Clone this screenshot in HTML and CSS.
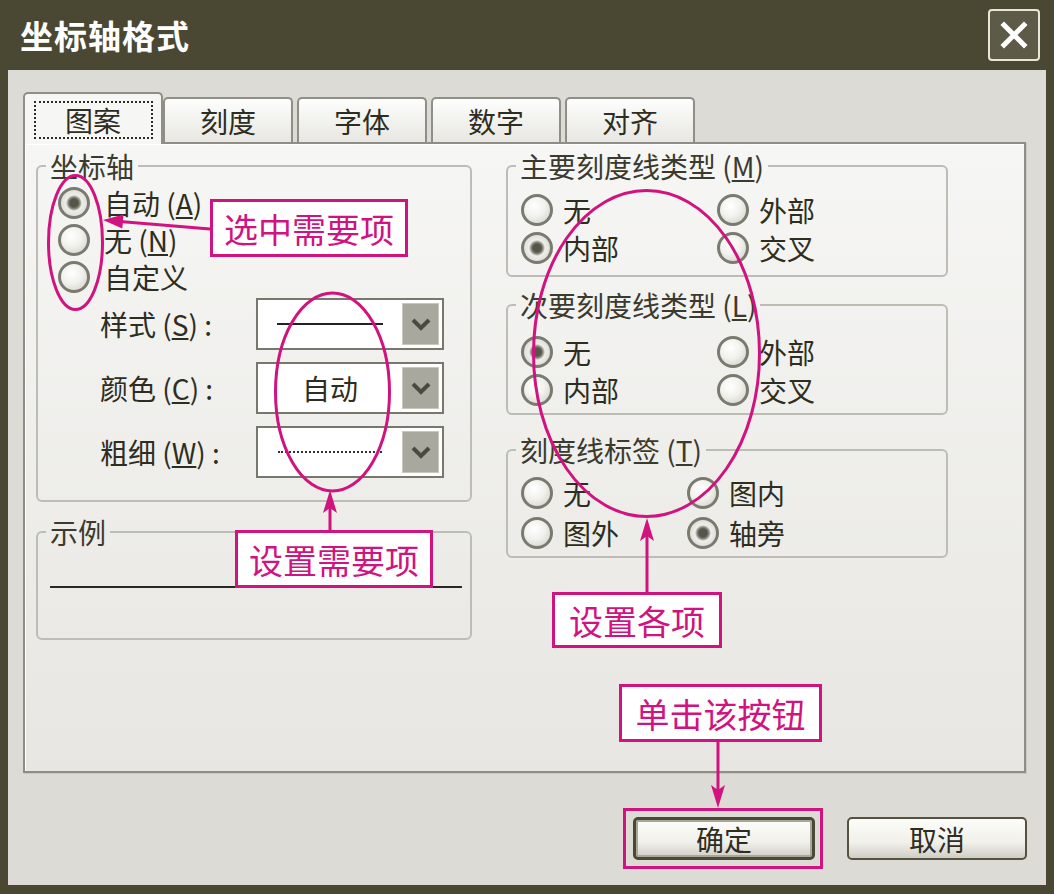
FILE: index.html
```html
<!DOCTYPE html>
<html lang="zh-CN">
<head>
    <meta charset="UTF-8">
    <meta name="viewport" content="width=device-width, initial-scale=1.0">
    <title>坐标轴格式</title>
    <link rel="stylesheet" href="styles.css">
</head>
<body>
<div class="window">
    <div class="titlebar">
        <span class="title">坐标轴格式</span>
        <span class="close">
            <svg width="30" height="30" viewBox="0 0 30 30"><path d="M5 5 L25 25 M25 5 L5 25" stroke="#fff" stroke-width="5" stroke-linecap="square"/></svg>
        </span>
    </div>
    <div class="client">
        <div class="tabs">
            <div class="tab active"><span class="focus">图案</span></div>
            <div class="tab">刻度</div>
            <div class="tab">字体</div>
            <div class="tab">数字</div>
            <div class="tab">对齐</div>
        </div>
        <div class="panel">
            <div class="col col-left">
                <fieldset class="group">
                    <legend>坐标轴</legend>
                    <div class="axis-body">
                        <div class="radio-row"><span class="radio on"></span>自动 (<u>A</u>)</div>
                        <div class="radio-row"><span class="radio"></span>无 (<u>N</u>)</div>
                        <div class="radio-row"><span class="radio"></span>自定义</div>
                        <div class="fields">
                            <div class="field">
                                <span class="field-label">样式 (<u>S</u>) :</span>
                                <div class="combo"><span class="combo-value"><span class="line-solid"></span></span><span class="combo-btn"><svg width="22" height="18" viewBox="0 0 22 18"><polyline points="3,5 11,13 19,5" fill="none" stroke="#4a4a3e" stroke-width="4"/></svg></span></div>
                            </div>
                            <div class="field">
                                <span class="field-label">颜色 (<u>C</u>) :</span>
                                <div class="combo"><span class="combo-value">自动</span><span class="combo-btn"><svg width="22" height="18" viewBox="0 0 22 18"><polyline points="3,5 11,13 19,5" fill="none" stroke="#4a4a3e" stroke-width="4"/></svg></span></div>
                            </div>
                            <div class="field">
                                <span class="field-label">粗细 (<u>W</u>) :</span>
                                <div class="combo"><span class="combo-value"><span class="line-dotted"></span></span><span class="combo-btn"><svg width="22" height="18" viewBox="0 0 22 18"><polyline points="3,5 11,13 19,5" fill="none" stroke="#4a4a3e" stroke-width="4"/></svg></span></div>
                            </div>
                        </div>
                    </div>
                </fieldset>
                <fieldset class="group sample">
                    <legend>示例</legend>
                    <div class="sample-body"><div class="sample-line"></div></div>
                </fieldset>
            </div>
            <div class="col col-right">
                <fieldset class="group">
                    <legend>主要刻度线类型 (<u>M</u>)</legend>
                    <div class="tick-body major">
                        <div class="radio-row"><span class="radio"></span>无</div>
                        <div class="radio-row"><span class="radio"></span>外部</div>
                        <div class="radio-row"><span class="radio on"></span>内部</div>
                        <div class="radio-row"><span class="radio"></span>交叉</div>
                    </div>
                </fieldset>
                <fieldset class="group minor-group">
                    <legend>次要刻度线类型 (<u>L</u>)</legend>
                    <div class="tick-body minor">
                        <div class="radio-row"><span class="radio on"></span>无</div>
                        <div class="radio-row"><span class="radio"></span>外部</div>
                        <div class="radio-row"><span class="radio"></span>内部</div>
                        <div class="radio-row"><span class="radio"></span>交叉</div>
                    </div>
                </fieldset>
                <fieldset class="group label-group">
                    <legend>刻度线标签 (<u>T</u>)</legend>
                    <div class="tick-body labels">
                        <div class="radio-row"><span class="radio"></span>无</div>
                        <div class="radio-row"><span class="radio"></span>图内</div>
                        <div class="radio-row"><span class="radio"></span>图外</div>
                        <div class="radio-row"><span class="radio on"></span>轴旁</div>
                    </div>
                </fieldset>
            </div>
        </div>
        <div class="buttons">
            <div class="btn default">确定</div>
            <div class="btn">取消</div>
        </div>
    </div>

    <!-- callouts drawn over the dialog -->
    <svg class="marks" width="1054" height="894" viewBox="0 0 1054 894">
        <g fill="none" stroke="#d0137f" stroke-width="3">
            <ellipse cx="75.5" cy="242.5" rx="27" ry="67"/>
            <ellipse cx="332.5" cy="392" rx="57" ry="99"/>
            <ellipse cx="646.5" cy="353.5" rx="113" ry="163"/>
            <line x1="210" y1="229" x2="120" y2="221.5"/>
            <line x1="330" y1="530" x2="330" y2="505"/>
            <line x1="647" y1="592" x2="647" y2="535"/>
            <line x1="718" y1="742" x2="718" y2="792"/>
            <rect x="624.5" y="809.5" width="197" height="58"/>
        </g>
        <g fill="#d0137f">
            <polygon points="103,220 123.5,214.5 122.3,228.5"/>
            <polygon points="330,490 323,513 330,508 337,513"/>
            <polygon points="647,518 640,541 647,536 654,541"/>
            <polygon points="718,808 711,785 718,790 725,785"/>
        </g>
    </svg>
    <div class="note note-select">选中需要项</div>
    <div class="note note-set">设置需要项</div>
    <div class="note note-each">设置各项</div>
    <div class="note note-click">单击该按钮</div>
</div>
</body>
</html>
```

FILE: styles.css
```css
* {
    box-sizing: border-box;
}
body {
    margin: 0;
    background: #4a4833;
    font-family: "Noto Sans CJK SC", "Liberation Sans", sans-serif;
    color: #2e2d22;
}
.window {
    position: relative;
    width: 1054px;
    height: 894px;
    background: #4a4833;
    overflow: hidden;
}
.titlebar {
    height: 70px;
    display: flex;
    align-items: center;
    justify-content: space-between;
    padding: 0 14px 0 20px;
}
.title {
    color: #fff;
    font-size: 33px;
    font-weight: 700;
    letter-spacing: 1px;
}
.close {
    width: 52px;
    height: 52px;
    border: 2px solid #e8e6d8;
    border-radius: 4px;
    background: #5d5b47;
    display: flex;
    align-items: center;
    justify-content: center;
}
.client {
    margin: 0 8px;
    width: 1038px;
    height: 815px;
    background: #dcdbd6;
    padding-top: 22px;
}

/* tabs */
.tabs {
    position: relative;
    z-index: 2;
    display: flex;
    align-items: flex-end;
    height: 50px;
    padding-left: 15px;
}
.tab {
    width: 130px;
    height: 45px;
    margin-left: 4px;
    border: 2px solid #908f87;
    border-bottom: none;
    border-radius: 5px 5px 0 0;
    background: linear-gradient(#fdfdfc, #e8e7e2);
    font-size: 28px;
    display: flex;
    align-items: center;
    justify-content: center;
}
.tab.active {
    width: 140px;
    height: 52px;
    margin-left: 0;
    margin-bottom: -2px;
    background: #f6f6f4;
    padding-top: 2px;
}
.tab.active + .tab {
    margin-left: 0;
}
.focus {
    border: 2px dotted #2e2d22;
    width: 119px;
    height: 38px;
    line-height: 34px;
    text-align: center;
}
.panel {
    margin-left: 15px;
    width: 1003px;
    height: 631px;
    border: 2px solid #8e8d86;
    background: linear-gradient(#f6f6f4, #e7e6e2);
    box-shadow: inset 1px 1px 0 #fff, 1px 1px 0 #c9c8c1;
    display: flex;
    gap: 34px;
    padding: 7px 0 0 11px;
}
.col {
    display: flex;
    flex-direction: column;
}
.col-left {
    width: 436px;
}
.col-right {
    width: 442px;
}

/* group boxes */
.group {
    margin: 0;
    padding: 0;
    min-width: 0;
    border: 2px solid #bebdb5;
    border-radius: 6px;
}
.group legend {
    margin-left: 8px;
    padding: 0 4px;
    font-size: 28px;
    line-height: 30px;
    color: #3b3a2e;
}
.radio-row {
    display: flex;
    align-items: center;
    height: 37px;
    font-size: 28px;
    white-space: nowrap;
}
.radio {
    flex: none;
    width: 32px;
    height: 32px;
    margin-right: 14px;
    border: 3px solid #7a7a70;
    border-radius: 50%;
    background: radial-gradient(circle at 40% 35%, #fff 0%, #f1f1ed 45%, #cfcfc7 100%);
}
.radio.on {
    background: radial-gradient(circle, #55554a 0, #55554a 4px, #8d8d83 6px, #eeeeea 8px, #d2d2ca 100%);
}
.axis-body {
    padding: 3px 0 22px 20px;
}
.fields {
    margin-top: 3px;
}
.field {
    display: flex;
    align-items: center;
    height: 52px;
    margin-left: 42px;
    font-size: 28px;
}
.field + .field {
    margin-top: 12px;
}
.field-label {
    width: 156px;
    white-space: nowrap;
}
.combo {
    width: 188px;
    height: 52px;
    border: 2px solid #78776e;
    background: #fff;
    display: flex;
    align-items: center;
    padding-right: 3px;
}
.combo-value {
    flex: 1;
    display: flex;
    align-items: center;
    justify-content: center;
    font-size: 28px;
}
.line-solid {
    width: 106px;
    border-top: 2px solid #222;
}
.line-dotted {
    width: 104px;
    border-top: 2px dotted #333;
}
.combo-btn {
    width: 37px;
    height: 42px;
    background: #a9a89e;
    border: 1px solid #c8c7be;
    display: flex;
    align-items: center;
    justify-content: center;
}
.sample {
    margin-top: 15px;
}
.sample-body {
    padding: 39px 8px 50px 12px;
}
.sample-line {
    border-top: 2px solid #2a291f;
}

.tick-body {
    display: grid;
    grid-template-columns: 196px auto;
    padding: 10px 0 8px 13px;
}
.tick-body .radio-row {
    height: 38px;
}
.tick-body .radio {
    margin-right: 10px;
}
.minor-group {
    margin-top: 13px;
}
.tick-body.minor {
    padding: 13px 0 4px 13px;
}
.label-group {
    margin-top: 20px;
}
.tick-body.labels {
    grid-template-columns: 166px auto;
    row-gap: 2px;
    padding: 9px 0 4px 13px;
}

/* buttons */
.buttons {
    display: flex;
    justify-content: flex-end;
    gap: 32px;
    margin-top: 44px;
    padding-right: 19px;
}
.btn {
    width: 180px;
    height: 43px;
    border: 2px solid #55533f;
    border-radius: 5px;
    background: linear-gradient(#fcfcfa 0%, #f1f0eb 60%, #cfcec6 100%);
    font-size: 28px;
    display: flex;
    align-items: center;
    justify-content: center;
}
.btn.default {
    width: 182px;
    border: 3px solid #4b4936;
    box-shadow: inset 0 0 0 2px #a9a798;
}

/* callouts */
.marks {
    position: absolute;
    left: 0;
    top: 0;
    pointer-events: none;
}
.note {
    position: absolute;
    background: #fff;
    border: 3px solid #d0137f;
    color: #d0137f;
    font-size: 34px;
    display: flex;
    align-items: center;
    justify-content: center;
    white-space: nowrap;
}
.note-select {
    left: 210px;
    top: 199px;
    width: 198px;
    height: 58px;
}
.note-set {
    left: 235px;
    top: 530px;
    width: 198px;
    height: 58px;
}
.note-each {
    left: 552px;
    top: 592px;
    width: 170px;
    height: 56px;
}
.note-click {
    left: 619px;
    top: 684px;
    width: 203px;
    height: 58px;
}
```
